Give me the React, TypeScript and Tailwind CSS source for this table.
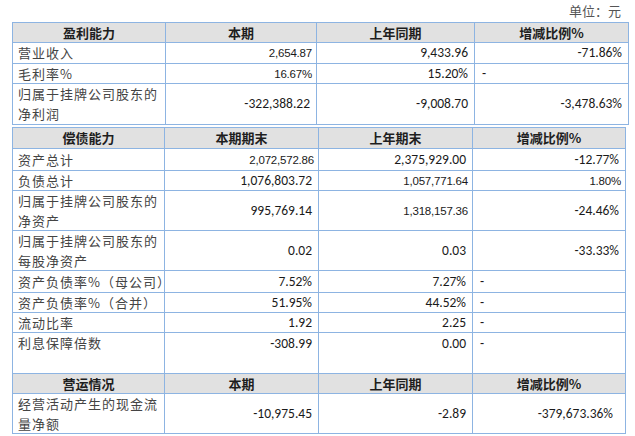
import React from "react";

type Cell = { t: string; small?: boolean; left?: boolean; wide?: boolean };
type Row = {
  h: string;
  head?: boolean;
  top?: boolean;
  label: string[];
  cells: Cell[];
};

const cjk = "font-['Noto_Sans_CJK_SC','Noto_Sans',sans-serif]";
const num = "font-['Carlito','Lato','Liberation_Sans',sans-serif] text-[13.5px]";
const narrow =
  "font-['Liberation_Sans_Narrow','Liberation_Sans',sans-serif] text-[11.5px] tracking-[-0.2px]";

const profit: Row[] = [
  { h: "h-[20px]", head: true, label: ["盈利能力"], cells: [{ t: "本期" }, { t: "上年同期" }, { t: "增减比例%" }] },
  { h: "h-[21px]", label: ["营业收入"], cells: [{ t: "2,654.87", small: true }, { t: "9,433.96" }, { t: "-71.86%" }] },
  { h: "h-[20px]", label: ["毛利率%"], cells: [{ t: "16.67%", small: true }, { t: "15.20%" }, { t: "-", left: true }] },
  {
    h: "h-[41px]",
    label: ["归属于挂牌公司股东的", "净利润"],
    cells: [{ t: "-322,388.22" }, { t: "-9,008.70" }, { t: "-3,478.63%" }],
  },
];

const debt: Row[] = [
  { h: "h-[21px]", head: true, label: ["偿债能力"], cells: [{ t: "本期期末" }, { t: "上年期末" }, { t: "增减比例%" }] },
  { h: "h-[22px]", label: ["资产总计"], cells: [{ t: "2,072,572.86", small: true }, { t: "2,375,929.00" }, { t: "-12.77%" }] },
  {
    h: "h-[20px]",
    label: ["负债总计"],
    cells: [{ t: "1,076,803.72" }, { t: "1,057,771.64", small: true }, { t: "1.80%", small: true }],
  },
  {
    h: "h-[40px]",
    label: ["归属于挂牌公司股东的", "净资产"],
    cells: [{ t: "995,769.14" }, { t: "1,318,157.36", small: true }, { t: "-24.46%" }],
  },
  {
    h: "h-[40px]",
    label: ["归属于挂牌公司股东的", "每股净资产"],
    cells: [{ t: "0.02" }, { t: "0.03" }, { t: "-33.33%" }],
  },
  { h: "h-[22px]", label: ["资产负债率%（母公司）"], cells: [{ t: "7.52%" }, { t: "7.27%" }, { t: "-", left: true }] },
  { h: "h-[20px]", label: ["资产负债率%（合并）"], cells: [{ t: "51.95%" }, { t: "44.52%" }, { t: "-", left: true }] },
  { h: "h-[20px]", label: ["流动比率"], cells: [{ t: "1.92" }, { t: "2.25" }, { t: "-", left: true }] },
  { h: "h-[41px]", top: true, label: ["利息保障倍数"], cells: [{ t: "-308.99" }, { t: "0.00" }, { t: "-", left: true }] },
  { h: "h-[20px]", head: true, label: ["营运情况"], cells: [{ t: "本期" }, { t: "上年同期" }, { t: "增减比例%" }] },
  {
    h: "h-[40px]",
    label: ["经营活动产生的现金流", "量净额"],
    cells: [{ t: "-10,975.45" }, { t: "-2.89" }, { t: "-379,673.36%", wide: true }],
  },
];

function Table({ rows, cols }: { rows: Row[]; cols: string }) {
  const line = "border-r border-b border-[#8db4e2]";
  return (
    <div className={`grid ${cols} border-l border-t border-[#8db4e2] w-fit`}>
      {rows.map((r, i) =>
        r.head ? (
          <React.Fragment key={i}>
            {[r.label[0], ...r.cells.map((c) => c.t)].map((t, j) => (
              <div
                key={j}
                className={`${r.h} ${line} bg-[#e1e1e1] flex items-center justify-center ${cjk} text-[13px] font-bold text-[#1e1e1e]`}
              >
                {t}
              </div>
            ))}
          </React.Fragment>
        ) : (
          <React.Fragment key={i}>
            <div
              className={`${r.h} ${line} flex flex-col ${r.top ? "justify-start" : "justify-center"} pl-[5px] ${cjk} text-[13px] leading-[20px] tracking-[1px] text-[#444] whitespace-nowrap`}
            >
              {r.label.map((l, k) => (
                <span key={k}>{l}</span>
              ))}
            </div>
            {r.cells.map((c, j) => (
              <div
                key={j}
                className={`${r.h} ${line} flex ${r.top ? "items-start pt-[1px]" : "items-center"} ${
                  c.left
                    ? "justify-start pl-[7px]"
                    : c.wide
                    ? "justify-end pr-[12px]"
                    : c.small
                    ? "justify-end pr-[4px]"
                    : "justify-end pr-[6px]"
                } ${c.small ? narrow : num} leading-[20px] text-[#1a1a1a] whitespace-nowrap`}
              >
                {c.t}
              </div>
            ))}
          </React.Fragment>
        )
      )}
    </div>
  );
}

export default function App() {
  return (
    <div className="w-[635px] h-[436px] bg-white overflow-hidden">
      <div className={`h-[22px] flex items-center justify-end pr-[14px] ${cjk} text-[13px] text-[#555]`}>
        单位：元
      </div>
      <div className="ml-[12px]">
        <Table rows={profit} cols="grid-cols-[153px_151px_158px_154px]" />
        <div className="mt-[2px]">
          <Table rows={debt} cols="grid-cols-[152px_154px_154px_153px]" />
        </div>
      </div>
    </div>
  );
}
